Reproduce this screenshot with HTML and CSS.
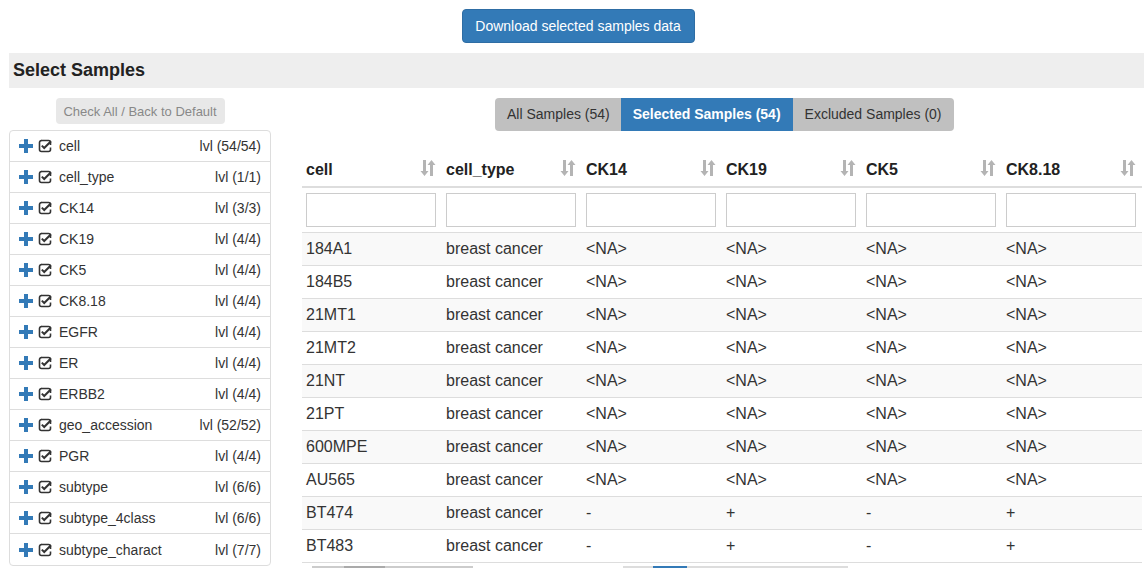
FILE: index.html
```html
<!DOCTYPE html>
<html>
<head>
<meta charset="utf-8">
<link rel="stylesheet" href="styles.css">
</head>
<body>
<div class="page">
  <div class="top">
    <button class="btn-download">Download selected samples data</button>
  </div>
  <div class="section-bar"><h3>Select Samples</h3></div>
  <div class="main">
    <div class="left">
      <div class="check-wrap"><button class="btn-check">Check All / Back to Default</button></div>
      <ul class="var-list" id="varlist"></ul>
    </div>
    <div class="right">
      <div class="tabs-wrap">
        <div class="tabs">
          <span class="tab tab-first">All Samples (54)</span>
          <span class="tab active">Selected Samples (54)</span>
          <span class="tab">Excluded Samples (0)</span>
        </div>
      </div>
      <table class="data">
        <thead>
          <tr class="head" id="headrow"></tr>
          <tr class="filters" id="filterrow"></tr>
        </thead>
        <tbody id="tbody"></tbody>
      </table>
      <div class="pager">
        <span class="pg pg1"><span class="pgd"></span></span>
        <span class="pg pg2"><span class="pgb"></span></span>
      </div>
    </div>
  </div>
</div>
<script src="script.js"></script>
</body>
</html>
```
FILE: script.js
```js
const vars = [
  ["cell","lvl (54/54)"],["cell_type","lvl (1/1)"],["CK14","lvl (3/3)"],["CK19","lvl (4/4)"],
  ["CK5","lvl (4/4)"],["CK8.18","lvl (4/4)"],["EGFR","lvl (4/4)"],["ER","lvl (4/4)"],
  ["ERBB2","lvl (4/4)"],["geo_accession","lvl (52/52)"],["PGR","lvl (4/4)"],["subtype","lvl (6/6)"],
  ["subtype_4class","lvl (6/6)"],["subtype_charact","lvl (7/7)"]
];
const plus = '<svg class="ic-plus" width="14" height="14" viewBox="0 0 14 14"><path d="M5 0h4v5h5v4H9v5H5V9H0V5h5z" fill="#337ab7"/></svg>';
const chk = '<svg class="ic-chk" width="14" height="14" viewBox="0 0 14 14"><path d="M3 1.5h7.5a2 2 0 0 1 2 2V6" fill="none" stroke="#333" stroke-width="1.6"/><path d="M12.5 8.5v2a2 2 0 0 1-2 2H3.5a2 2 0 0 1-2-2V3.5a2 2 0 0 1 2-2" fill="none" stroke="#333" stroke-width="1.6"/><path d="M3.8 6.6l2.4 2.4L13 2.2" fill="none" stroke="#333" stroke-width="2"/></svg>';
const ul = document.getElementById('varlist');
ul.innerHTML = vars.map(v => `<li class="var">${plus}${chk}<span class="vname">${v[0]}</span><span class="vlvl">${v[1]}</span></li>`).join('');

const cols = ["cell","cell_type","CK14","CK19","CK5","CK8.18"];
const sort = '<svg class="ic-sort" width="16" height="18" viewBox="0 0 16 18"><path d="M3 1h3v11h2.5L4.5 17 0.5 12H3z M10 17V6H7.5l4-5 4 5H13v11z" fill="#b4b4b4"/></svg>';
document.getElementById('headrow').innerHTML = cols.map(c => `<th><span>${c}</span>${sort}</th>`).join('');
document.getElementById('filterrow').innerHTML = cols.map(() => `<td><input type="text"></td>`).join('');
const rows = [
  ["184A1","breast cancer","<NA>","<NA>","<NA>","<NA>"],
  ["184B5","breast cancer","<NA>","<NA>","<NA>","<NA>"],
  ["21MT1","breast cancer","<NA>","<NA>","<NA>","<NA>"],
  ["21MT2","breast cancer","<NA>","<NA>","<NA>","<NA>"],
  ["21NT","breast cancer","<NA>","<NA>","<NA>","<NA>"],
  ["21PT","breast cancer","<NA>","<NA>","<NA>","<NA>"],
  ["600MPE","breast cancer","<NA>","<NA>","<NA>","<NA>"],
  ["AU565","breast cancer","<NA>","<NA>","<NA>","<NA>"],
  ["BT474","breast cancer","-","+","-","+"],
  ["BT483","breast cancer","-","+","-","+"]
];
const esc = s => s.replace(/&/g,'&amp;').replace(/</g,'&lt;').replace(/>/g,'&gt;');
document.getElementById('tbody').innerHTML = rows.map(r => `<tr>${r.map(c => `<td>${esc(c)}</td>`).join('')}</tr>`).join('');
```
FILE: styles.css
```css
html, body { margin: 0; padding: 0; overflow: hidden; background: #fff; }
body { font-family: "Liberation Sans", Arial, sans-serif; font-size: 14px; color: #333; }
.page { width: 1156px; padding: 0 9px; box-sizing: border-box; }
.top { display: flex; justify-content: center; padding-top: 9px; height: 53px; box-sizing: border-box; }
.btn-download {
  font-family: "Liberation Sans", Arial, sans-serif; font-size: 14px; color: #fff;
  background: #337ab7; border: 1px solid #2e6da4; border-radius: 4px;
  height: 34px; padding: 0 12px; width: 233px;
}
.section-bar { background: #eee; height: 35px; display: flex; align-items: center; margin-right: -9px; }
.section-bar h3 { margin: 0; padding-left: 4px; font-size: 18px; font-weight: bold; color: #222; }
.main { display: flex; }
.left { width: 262px; flex: none; }
.check-wrap { display: flex; justify-content: center; padding-top: 10px; }
.btn-check {
  font-family: "Liberation Sans", Arial, sans-serif; font-size: 13px; color: #888;
  background: #e8e8e8; border: none; border-radius: 4px; height: 26px; width: 169px; padding: 0;
}
.var-list { list-style: none; margin: 6px 0 0; padding: 0; border: 1px solid #ddd; border-radius: 4px; }
.var { display: flex; align-items: center; height: 30px; padding: 0 9px 0 9px; border-bottom: 1px solid #ddd; }
.var:last-child { border-bottom: none; height: 31px; }
.ic-plus { flex: none; margin-right: 5px; }
.ic-chk { flex: none; margin-right: 7px; }
.vname { flex: 1; }
.vlvl { flex: none; }
.right { margin-left: 31px; flex: none; width: 869px; }
.tabs-wrap { display: flex; padding-top: 10px; margin-left: 193px; }
.tabs { display: flex; border-radius: 4px; overflow: hidden; background: #c0c0c0; }
.tab { height: 33px; line-height: 33px; padding: 0 12px; color: #333; white-space: nowrap; }
.tab-first { padding: 0 11px 0 12px; }
.tab.active { background: #337ab7; color: #fff; font-weight: bold; padding: 0 12px 0 12px; }
.data { border-collapse: collapse; margin-top: 18px; table-layout: fixed; width: 840px; }
.data th, .data td { width: 140px; box-sizing: border-box; }
.head th { text-align: left; font-weight: bold; padding: 10px 6px 6px 4px; height: 38px; border-bottom: 2px solid #ddd; font-size: 16px; color: #222; position: relative; }
.head th span { line-height: 20px; }
.ic-sort { position: absolute; right: 6px; top: 10px; }
.filters td { padding: 5px 4px; border-bottom: 1px solid #ddd; }
.filters input { width: 130px; height: 34px; box-sizing: border-box; border: 1px solid #ccc; margin: 0; display: block; }
#tbody td { padding: 6px 4px; line-height: 20px; border-bottom: 1px solid #ddd; font-size: 16px; white-space: nowrap; }
#tbody tr:nth-child(odd) td { background: #f9f9f9; }
.pager { position: relative; height: 8px; }
.pg { position: absolute; top: 3px; height: 2px; background: #ccc; }
.pg1 { left: 10px; width: 161px; }
.pg1 .pgd { position: absolute; left: 32px; width: 41px; height: 2px; background: #aaa; }
.pg2 { left: 321px; width: 225px; background: #ddd; }
.pg2 .pgb { position: absolute; left: 30px; width: 34px; height: 2px; background: #337ab7; }
```
